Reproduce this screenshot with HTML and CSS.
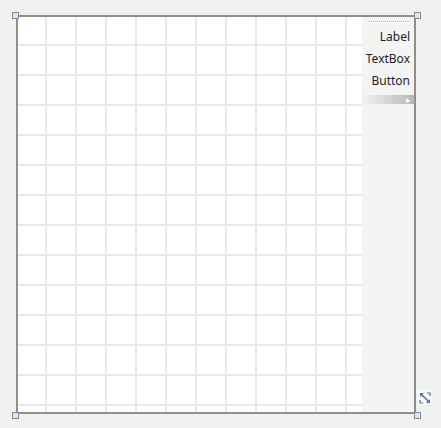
FILE: index.html
```html
<!DOCTYPE html>
<html lang="en">
<head>
    <meta charset="UTF-8">
    <title>Form Designer</title>
    <link rel="stylesheet" href="styles.css">
</head>
<body>
    <div class="designer">
        <div class="form-frame">
            <div class="grid-surface"></div>
            <div class="tray">
                <div class="tray-grip"></div>
                <div class="tray-item">Label</div>
                <div class="tray-item">TextBox</div>
                <div class="tray-item">Button</div>
                <div class="tray-more"><span class="more-arrow">&#9656;</span></div>
            </div>
            <span class="handle handle-tl"></span>
            <span class="handle handle-tr"></span>
            <span class="handle handle-bl"></span>
            <span class="handle handle-br"></span>
        </div>
        <div class="zoom-btn">
            <svg width="14" height="14" viewBox="0 0 14 14">
                <path d="M3 3 L11 11" stroke="#5b7390" stroke-width="1.6" fill="none"/>
                <path d="M2 2 H6 L2 6 Z" fill="#5b7390"/>
                <path d="M12 12 H8 L12 8 Z" fill="#5b7390"/>
                <path d="M9 2 H12 V5" stroke="#5b7390" stroke-width="1.2" fill="none"/>
                <path d="M2 9 V12 H5" stroke="#5b7390" stroke-width="1.2" fill="none"/>
            </svg>
        </div>
    </div>
</body>
</html>
```

FILE: styles.css
```css
body {
    margin: 0;
    background: #f0f0f0;
    font-family: "Noto Sans", "Open Sans", sans-serif;
    color: #1e1e1e;
}
.designer {
    position: relative;
    width: 441px;
    height: 428px;
    padding: 15px 0 0 16px;
    box-sizing: border-box;
}
.form-frame {
    position: relative;
    display: flex;
    width: 400px;
    height: 399px;
    border: 2px solid #968d84;
    box-sizing: border-box;
}
.grid-surface {
    width: 344px;
    background-color: #ffffff;
    background-image:
        linear-gradient(to right, transparent 27px, #e8e8e8 27px, #e8e8e8 29px, transparent 29px),
        linear-gradient(to bottom, transparent 27px, #e8e8e8 27px, #e8e8e8 29px, transparent 29px);
    background-size: 30px 30px;
}
.tray {
    flex: 1;
    background: #f4f4f4;
    display: flex;
    flex-direction: column;
}
.tray-grip {
    margin: 4px 4px 0 7px;
    border-top: 1px dotted #b4b4b4;
    height: 4px;
}
.tray-item {
    height: 22px;
    line-height: 22px;
    font-size: 12px;
    text-align: right;
    padding-right: 4px;
}
.tray-item:first-of-type {
    height: 19px;
}
.tray-more {
    margin-top: 3px;
    height: 9px;
    background: linear-gradient(to right, #f3f3f3, #b7b7b7);
    text-align: right;
    padding-right: 3px;
}
.more-arrow {
    display: inline-block;
    color: #ffffff;
    font-size: 9px;
    line-height: 9px;
    vertical-align: top;
}
.handle {
    position: absolute;
    width: 7px;
    height: 7px;
    box-sizing: border-box;
    border: 1px solid #7c8ca2;
    background: #dde4ec;
}
.handle-tl { left: -6px; top: -5px; }
.handle-tr { right: -7px; top: -5px; }
.handle-bl { left: -6px; bottom: -7px; }
.handle-br { right: -7px; bottom: -7px; }
.zoom-btn {
    position: absolute;
    left: 417px;
    top: 390px;
    width: 15px;
    height: 15px;
    background: #f8f8f8;
    display: flex;
    align-items: center;
    justify-content: center;
}
```
